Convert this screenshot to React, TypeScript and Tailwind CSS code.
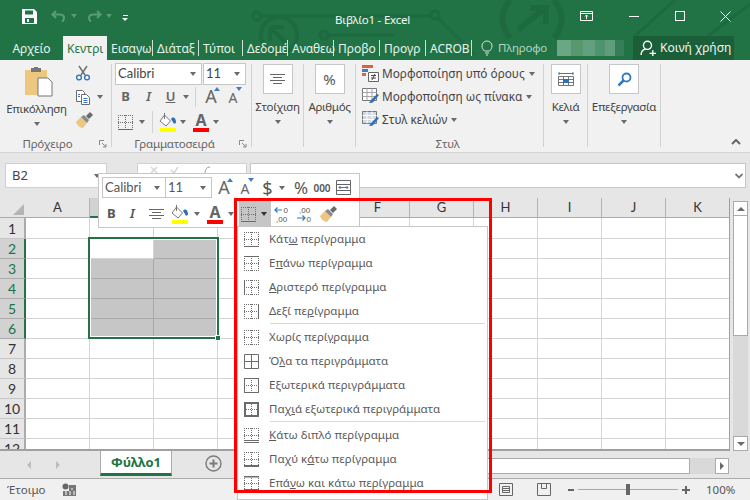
import React from "react";

const UI = "font-['Noto_Sans','Open_Sans',sans-serif]";
const CAL = "font-['Lato','Liberation_Sans',sans-serif]";

function Caret({ className = "" }: { className?: string }) {
  return <span className={`inline-block h-0 w-0 shrink-0 border-x-[3.5px] border-t-[4px] border-x-transparent border-t-[#6a6a6a] ${className}`} />;
}

type Edge = "top" | "bottom" | "left" | "right" | "all" | "outer" | "thickOuter" | "double" | "thickBottom" | "topBottom" | "none";

function BorderIcon({ kind }: { kind: Edge }) {
  const c = "#6b6b6b";
  const dot = { stroke: "#6f6f6f", strokeWidth: 1, strokeDasharray: "1 1", fill: "none" } as const;
  const solid = { stroke: c, strokeWidth: 1, fill: "none" } as const;
  if (kind === "all") {
    return (
      <svg width="15" height="15" viewBox="0 0 15 15">
        <path d="M.5.5h14v14H.5zM7.5 .5v14M.5 7.5h14" {...solid} />
      </svg>
    );
  }
  return (
    <svg width="15" height="15" viewBox="0 0 15 15">
      <path d="M0 .5h15M0 14.500h15M.5 0v15M14.500 0v15M7.500 0v15M0 7.500h15" {...dot} />
      {kind === "top" && <path d="M0 .5h15" {...solid} />}
      {kind === "bottom" && <path d="M0 14.500h15" {...solid} />}
      {kind === "left" && <path d="M.5 0v15" {...solid} />}
      {kind === "right" && <path d="M14.500 0v15" {...solid} />}
      {kind === "outer" && <path d="M.5.5h14v14H.5z" {...solid} />}
      {kind === "thickOuter" && <path d="M1 1h13v13H1z" stroke={c} strokeWidth="2" fill="none" />}
      {kind === "double" && <path d="M0 12.500h15M0 14.500h15" {...solid} />}
      {kind === "thickBottom" && <path d="M0 14h15" stroke={c} strokeWidth="2" />}
      {kind === "topBottom" && <path d="M0 .5h15M0 14h15" stroke={c} strokeWidth="2" />}
    </svg>
  );
}

function Scissors() {
  return (
    <svg width="16" height="16" viewBox="0 0 16 16" fill="none">
      <path d="M4 1l6 9M12 1L6 10" stroke="#6d6d6d" strokeWidth="1.4" />
      <circle cx="4" cy="12.500" r="2.400" stroke="#2f6fb5" strokeWidth="1.300" />
      <circle cx="12" cy="12.500" r="2.400" stroke="#2f6fb5" strokeWidth="1.300" />
    </svg>
  );
}
function CopyIcon() {
  return (
    <svg width="16" height="16" viewBox="0 0 16 16" fill="#fff" stroke="#6d6d6d">
      <path d="M1.500 1.500h6l2 2v9h-8z" />
      <path d="M6.500 5.500h5l3 3v7h-8z" />
      <path d="M8.500 9.500h4M8.500 11.500h4M8.500 13.500h4M3 5.500h2M3 7.500h2" fill="none" stroke="#3a78b8" />
    </svg>
  );
}
function Painter() {
  return (
    <svg width="18" height="17" viewBox="0 0 18 17">
      <path d="M1 10l5-5 6 6-4 5c-3 0-6-3-7-6z" fill="#eec77e" />
      <path d="M6 5l3-2 5 5-2 3z" fill="#8a8a8a" />
      <path d="M11 4l4-4 3 3-4 4z" fill="#6a6a6a" />
    </svg>
  );
}
function FillIcon() {
  return (
    <span className="flex w-[22px] flex-col items-center">
      <svg width="18" height="14" viewBox="0 0 18 14" fill="none">
        <path d="M5.500 2l6 6-4.500 5L1 8z" stroke="#777" fill="#fff" />
        <path d="M5.500 0v6" stroke="#777" />
        <path d="M12 6c2-3 5-1 5 3 0 2-3 2-3 0z" fill="#2f6fb5" />
      </svg>
      <span className="mt-px h-[4px] w-[16px] bg-[#ffff00]" />
    </span>
  );
}
function ColorA() {
  return (
    <span className="flex w-[18px] flex-col items-center">
      <span className={`text-[16px] font-bold leading-[14px] text-[#666] ${UI}`}>A</span>
      <span className="mt-px h-[4px] w-[16px] bg-[#ff0000]" />
    </span>
  );
}
function GrowA({ up }: { up: boolean }) {
  return (
    <span className="relative inline-flex h-[18px] w-[18px] items-end justify-center">
      <span className={`${UI} leading-none text-[#666] ${up ? "text-[18px]" : "text-[14px]"}`}>A</span>
      <span className={`absolute right-0 top-0 h-0 w-0 border-x-[3px] border-x-transparent ${up ? "border-b-[4px] border-b-[#3f7fbf]" : "border-t-[4px] border-t-[#3f7fbf]"}`} />
    </span>
  );
}
function Decimal({ dir }: { dir: "inc" | "dec" }) {
  return (
    <svg width="18" height="17" viewBox="0 0 18 17" fill="none">
      {dir === "inc" ? (
        <>
          <path d="M9 4H2M4.500 1.500L2 4l2.500 2.500" stroke="#3478bd" strokeWidth="1.200" />
          <text x="10.500" y="7" fontSize="8" fill="#555" fontFamily="Liberation Sans">0</text>
          <text x="3" y="15.500" fontSize="8" fill="#555" fontFamily="Liberation Sans">,00</text>
        </>
      ) : (
        <>
          <text x="3" y="7" fontSize="8" fill="#555" fontFamily="Liberation Sans">,00</text>
          <path d="M1 12h8M6.500 9.500L9 12l-2.500 2.500" stroke="#3478bd" strokeWidth="1.200" />
          <text x="10.500" y="15.500" fontSize="8" fill="#555" fontFamily="Liberation Sans">0</text>
        </>
      )}
    </svg>
  );
}
function CenterLines() {
  return (
    <svg width="15" height="11" viewBox="0 0 15 11" stroke="#666">
      <path d="M0 .5h15M3 3.500h9M0 6.500h15M3 9.500h9" />
    </svg>
  );
}
function Launcher() {
  return (
    <svg width="8" height="8" viewBox="0 0 8 8" fill="none" stroke="#888">
      <path d="M.5 5V.5H5M3 3l4 4M7 4v3H4" />
    </svg>
  );
}
function StyleIcon({ kind }: { kind: "cond" | "table" | "cell" }) {
  if (kind === "cond") {
    return (
      <svg width="17" height="17" viewBox="0 0 17 17">
        <path d="M0 0h11v3H0z" fill="#e0613a" />
        <path d="M0 4h6v3H0z" fill="#3f7fbf" />
        <path d="M0 8h4v3H0z" fill="#e0613a" />
        <path d="M6.500 7.500h10v9h-10z" fill="#fff" stroke="#666" />
        <path d="M9 10.500h5M9 13h5M10 15l3-6" stroke="#444" />
      </svg>
    );
  }
  return (
    <svg width="17" height="17" viewBox="0 0 17 17" fill="none">
      <path d="M.5.5h14v12H.5z" fill={kind === "cell" ? "#cfd8e3" : "#fff"} stroke="#777" />
      <path d="M5 .5v12M10 .5v12M.5 4.500h14M.5 8.500h14" stroke={kind === "cell" ? "#fff" : "#a5a5a5"} />
      <path d="M7 15l3-4 5-5 2 1-5 6c-1 2-3 2-5 2z" fill="#2f6fb5" />
    </svg>
  );
}
function BigBox({ children }: { children: React.ReactNode }) {
  return <span className="flex h-[30px] w-[30px] items-center justify-center border border-[#c6c6c6] bg-white">{children}</span>;
}

const tabs = [
  { t: "Εισαγω", w: "w-[46px]" },
  { t: "Διάταξ", w: "w-[46px]" },
  { t: "Τύποι", w: "w-[44px]" },
  { t: "Δεδομέ", w: "w-[45px]" },
  { t: "Αναθεω", w: "w-[46px]" },
  { t: "Προβο", w: "w-[46px]" },
  { t: "Προγρ", w: "w-[46px]" },
  { t: "ACROB", w: "w-[46px]" },
];

function Pattern() {
  return (
    <svg className="absolute left-0 top-0" width="750" height="60" viewBox="0 0 750 60" fill="none" stroke="#1d6a40" strokeWidth="3">
      <circle cx="257" cy="16" r="4" />
      <path d="M261 16h170" />
      <circle cx="279" cy="35" r="18" strokeWidth="4" />
      <path d="M270 27h14M270 27v14M270 27l18 18" strokeWidth="4" />
      <circle cx="324" cy="35" r="4" />
      <path d="M328 35h66" />
      <circle cx="435" cy="15" r="4" />
      <path d="M438 18l36 36" />
      <path d="M510 0c-10 12-10 26 0 38M554 0c10 12 10 26 0 38" strokeWidth="6" />
      <path d="M518 30L545 8M530 8h16v16" strokeWidth="6" />
      <path d="M635 36L675 0M708 36L750 4" />
    </svg>
  );
}

function TitleBar() {
  return (
    <div className="relative flex h-[36px] items-center pb-[4px] text-white">
      <svg className="ml-[22px]" width="15" height="15" viewBox="0 0 15 15" fill="#fff">
        <path d="M0 0h12l3 3v12H0zM3 1.500v4h8v-4zM3 9v5h9V9z" fillRule="evenodd" />
        <path d="M5 10h2v3H5z" />
      </svg>
      <svg className="ml-[14px]" width="16" height="12" viewBox="0 0 16 12" fill="none" stroke="#5d9a78" strokeWidth="2">
        <path d="M5 1L1.500 4.500 5 8M2 4.500h7c3 0 4 2 4 3.500s-1 3-2 3.500" />
      </svg>
      <Caret className="ml-[4px] !border-t-[#5d9a78]" />
      <svg className="ml-[9px]" width="16" height="12" viewBox="0 0 16 12" fill="none" stroke="#5d9a78" strokeWidth="2">
        <path d="M11 1l3.500 3.500L11 8M14 4.500H7C4 4.500 3 6.500 3 8s1 3 2 3.500" />
      </svg>
      <Caret className="ml-[4px] !border-t-[#5d9a78]" />
      <span className="ml-[10px] mt-[4px] flex flex-col items-center gap-[2px]">
        <span className="h-px w-[5px] bg-white" />
        <Caret className="!border-x-[3px] !border-t-[3px] !border-t-white" />
      </span>
      <span className={`ml-[207px] mt-[8px] text-[11.5px] tracking-[-0.2px] ${UI} text-[#f3f8f5]`}>Βιβλίο1 - Excel</span>
      <svg className="ml-[170px]" width="14" height="11" viewBox="0 0 14 11" fill="none" stroke="#fff">
        <path d="M.5.5h12v9H.5zM.5 2.500h12M6.500 8V4M5 5.500l1.500-1.500L8 5.500" />
      </svg>
      <span className="ml-[35px] h-px w-[10px] bg-white" />
      <span className="ml-[36px] h-[10px] w-[10px] border border-white" />
      <svg className="ml-[35px]" width="11" height="11" viewBox="0 0 11 11" stroke="#fff">
        <path d="M.5.5l10 10M10.500.5l-10 10" />
      </svg>
    </div>
  );
}

function TabBar() {
  return (
    <div className={`relative flex h-[24px] items-stretch text-[12px] text-[#e9f3ee] ${UI}`}>
      <span className="flex w-[63px] shrink-0 items-center justify-center pt-px">Αρχείο</span>
      <span className="flex w-[44px] shrink-0 items-center whitespace-nowrap bg-[#f1f1f1] pl-[4px] pt-px text-[#217346]">Κεντρι</span>
      {tabs.map(({ t, w }) => (
        <span key={t} className={`my-auto flex h-[16px] shrink-0 items-center whitespace-nowrap border-r border-[#cfe0d6] pl-[4px] pt-px ${w}`}>
          {t}
        </span>
      ))}
      <svg className="my-auto ml-[9px] shrink-0" width="12" height="16" viewBox="0 0 12 16" fill="none" stroke="#d8e8df">
        <path d="M3.500 11C2 9.500 1 8 1 6a5 5 0 0110 0c0 2-1 3.500-2.500 5zM4 13h4M5 15h2" />
      </svg>
      <span className="my-auto ml-[5px] w-[49px] shrink-0 whitespace-nowrap text-[11.5px] tracking-[-0.2px] text-[#b6d3c4]">Πληροφο</span>
      <span className="my-auto ml-[10px] flex h-[16px] w-[67px] shrink-0">
        <span className="h-full w-[14px] bg-[#6ba685]" />
        <span className="h-full w-[12px] bg-[#57986f]" />
        <span className="h-full w-[12px] bg-[#64a07f]" />
        <span className="h-full w-[10px] bg-[#4f9470]" />
        <span className="h-full w-[10px] bg-[#609d7c]" />
        <span className="h-full w-[9px] bg-[#357f58]" />
      </span>
      <span className="ml-[9px] flex w-[101px] shrink-0 items-center gap-[4px] bg-[#1b5f39] pl-[7px] text-[#f1f6f3]">
        <svg width="16" height="16" viewBox="0 0 15 15" fill="none" stroke="#fff" strokeWidth="1.300">
          <circle cx="7" cy="5" r="3.800" />
          <path d="M1 14c0-3 2-5 4-5.500M9 12.500h6M12 9.500v6" />
        </svg>
        Κοινή χρήση
      </span>
    </div>
  );
}

function GroupSep() {
  return <span className="mb-[5px] mt-[4px] w-px shrink-0 bg-[#d2d2d2]" />;
}

function Ribbon() {
  const label = "flex h-[16px] items-center justify-center whitespace-nowrap text-[11.5px] tracking-[-0.2px] text-[#666]";
  const big = "mt-[5px] whitespace-nowrap text-[11.5px] leading-[16px] tracking-[-0.3px]";
  return (
    <div className={`flex h-[93px] border-b border-[#d4d4d4] bg-[#f1f1f1] ${UI} text-[11.5px] text-[#444]`}>
      {/* Πρόχειρο */}
      <div className="flex w-[111px] shrink-0 flex-col">
        <div className="flex h-[76px]">
          <div className="flex w-[73px] flex-col items-center pt-[7px]">
            <svg className="ml-[5px]" width="30" height="30" viewBox="0 0 30 30">
              <path d="M1 3h22v25H1z" fill="#eec77e" />
              <path d="M7 1h10v4H7z" fill="#777" />
              <path d="M10 0h4v2h-4z" fill="#777" />
              <path d="M14 11h10l4 4v14H14z" fill="#fff" stroke="#777" />
            </svg>
            <span className="mt-[4px] text-[11.5px] leading-[16px] tracking-[-0.3px]">Επικόλληση</span>
            <Caret className="mt-[5px]" />
          </div>
          <div className="flex flex-col items-start gap-[7px] pl-[2px] pt-[5px]">
            <Scissors />
            <span className="mt-px flex items-center gap-[6px]"><CopyIcon /><Caret /></span>
            <Painter />
          </div>
        </div>
        <div className={`${label} relative`}>
          <span className="mr-[16px]">Πρόχειρο</span>
          <span className="absolute right-[4px] top-[4px]"><Launcher /></span>
        </div>
      </div>
      <GroupSep />
      {/* Γραμματοσειρά */}
      <div className="flex w-[139px] shrink-0 flex-col pl-[3px]">
        <div className="mt-[3px] flex h-[22px] w-[131px] gap-px">
          <span className={`flex w-[87px] items-center justify-between border border-[#c6c6c6] bg-white px-[2px] pr-[5px] text-[13px] ${CAL}`}>Calibri<Caret /></span>
          <span className={`flex w-[43px] items-center justify-between border border-[#c6c6c6] bg-white px-[2px] pr-[5px] text-[13px] ${CAL}`}>11<Caret /></span>
        </div>
        <div className="mt-px flex h-[22px] items-center">
          <b className="ml-[2px] w-[17px] text-center text-[13px] text-[#666]">B</b>
          <i className="ml-[6px] w-[17px] text-center text-[13px] font-semibold text-[#666]">I</i>
          <u className="ml-[5px] w-[17px] text-center text-[13px] font-semibold text-[#666]">U</u>
          <Caret className="ml-[4px]" />
          <span className="ml-[6px] h-[20px] w-px bg-[#d2d2d2]" />
          <span className="ml-[6px]"><GrowA up /></span>
          <span className="ml-[4px]"><GrowA up={false} /></span>
        </div>
        <div className="mt-[2px] flex h-[24px] items-center">
          <span className="ml-[3px] flex"><BorderIcon kind="bottom" /></span>
          <Caret className="ml-[6px]" />
          <span className="ml-[7px] h-[22px] w-px bg-[#d2d2d2]" />
          <span className="ml-[4px]"><FillIcon /></span>
          <Caret className="ml-px" />
          <span className="ml-[6px]"><ColorA /></span>
          <Caret className="ml-[3px]" />
        </div>
        <div className={`${label} relative mt-auto`}>
          <span className="mr-[17px]">Γραμματοσειρά</span>
          <span className="absolute right-[4px] top-[4px]"><Launcher /></span>
        </div>
      </div>
      <GroupSep />
      {/* Στοίχιση */}
      <div className="flex w-[51px] shrink-0 flex-col items-center pt-[4px]">
        <BigBox><CenterLines /></BigBox>
        <span className={big}>Στοίχιση</span>
        <Caret className="mt-[5px]" />
      </div>
      <GroupSep />
      {/* Αριθμός */}
      <div className="flex w-[51px] shrink-0 flex-col items-center pt-[4px]">
        <BigBox><span className="text-[15px] text-[#555]">%</span></BigBox>
        <span className={big}>Αριθμός</span>
        <Caret className="mt-[5px]" />
      </div>
      <GroupSep />
      {/* Στυλ */}
      <div className="flex w-[187px] shrink-0 flex-col pl-[6px]">
        <div className="flex flex-col gap-[6px] pt-[5px] text-[11.8px]">
          <span className="flex h-[17px] items-center gap-[3px] whitespace-nowrap"><StyleIcon kind="cond" />Μορφοποίηση υπό όρους<Caret className="ml-px" /></span>
          <span className="flex h-[17px] items-center gap-[3px] whitespace-nowrap"><StyleIcon kind="table" />Μορφοποίηση ως πίνακα<Caret className="ml-px" /></span>
          <span className="flex h-[17px] items-center gap-[3px] whitespace-nowrap"><StyleIcon kind="cell" />Στυλ κελιών<Caret className="ml-px" /></span>
        </div>
        <div className={`${label} mt-auto pr-[10px]`}>Στυλ</div>
      </div>
      <GroupSep />
      {/* Κελιά */}
      <div className="flex w-[43px] shrink-0 flex-col items-center pt-[4px]">
        <BigBox>
          <svg width="16" height="17" viewBox="0 0 16 17" fill="none">
            <path d="M.5 5.500h15v9H.5zM.5 8.500h15M.5 11.500h15M5.500 5.500v9M10.500 5.500v9" stroke="#777" />
            <path d="M5 8h6v4H5z" fill="#2f6fb5" />
            <path d="M1 2.500h14M1 1v3M15 1v3" stroke="#3478bd" />
          </svg>
        </BigBox>
        <span className={big}>Κελιά</span>
        <Caret className="mt-[5px]" />
      </div>
      <GroupSep />
      {/* Επεξεργασία */}
      <div className="flex w-[72px] shrink-0 flex-col items-center pt-[4px]">
        <BigBox>
          <svg width="15" height="15" viewBox="0 0 15 15" fill="none">
            <circle cx="9.500" cy="5.500" r="4" stroke="#3478bd" strokeWidth="1.800" />
            <path d="M6.500 8.500l-5 5" stroke="#3478bd" strokeWidth="2.500" />
          </svg>
        </BigBox>
        <span className={big}>Επεξεργασία</span>
        <Caret className="mt-[5px]" />
      </div>
      <GroupSep />
      <div className="flex flex-1 items-end justify-end pb-[7px] pr-[9px]">
        <svg width="10" height="6" viewBox="0 0 10 6" fill="none" stroke="#666" strokeWidth="2">
          <path d="M1 5l4-4 4 4" />
        </svg>
      </div>
    </div>
  );
}

function FormulaBar() {
  return (
    <div className={`flex h-[45px] items-start bg-[#e6e6e6] pt-[10px] ${UI} text-[13px] text-[#444]`}>
      <span className="ml-[5px] flex h-[25px] w-[102px] items-center justify-between border border-[#d0d0d0] bg-white px-[6px]">B2<Caret /></span>
      <span className="ml-[30px] flex h-[25px] w-[110px] items-start gap-[12px] border border-[#d0d0d0] bg-white pl-[12px] pt-[2px]">
        <svg width="8" height="8" viewBox="0 0 8 8" stroke="#d5d5d5" strokeWidth="1.500"><path d="M1 1l6 6M7 1L1 7" /></svg>
        <svg width="9" height="8" viewBox="0 0 9 8" fill="none" stroke="#d5d5d5" strokeWidth="1.500"><path d="M1 4l3 3 4-6" /></svg>
        <svg className="ml-[12px]" width="9" height="8" viewBox="0 0 9 8" fill="none" stroke="#999"><path d="M2 8c0-5 2-7 5-7" /></svg>
      </span>
      <span className="ml-[3px] flex h-[25px] w-[496px] items-center justify-end border border-[#c6c6c6] bg-white pr-[2px]">
        <svg width="8" height="6" viewBox="0 0 8 6" fill="none" stroke="#777" strokeWidth="1.800">
          <path d="M.5 1L4 4.500 7.500 1" />
        </svg>
      </span>
    </div>
  );
}

const cols = ["A", "B", "C", "D", "E", "F", "G", "H", "I", "J", "K"];
const rows = [1, 2, 3, 4, 5, 6, 7, 8, 9, 10, 11, 12];

function Sheet() {
  return (
    <div className="flex h-[253px] bg-[#e6e6e6]">
      <div className="relative h-[253px] w-[730px] shrink-0 overflow-hidden border-b-2 border-r border-[#a0a0a0]">
        <div className={`flex h-[20px] ${CAL} text-[13px] text-[#333]`}>
          <span className="flex w-[26px] shrink-0 items-end justify-end border-b border-[#ababab] pb-[2px] pr-[2px]">
            <span className="h-0 w-0 border-b-[11px] border-l-[11px] border-b-[#b4b4b4] border-l-transparent" />
          </span>
          {cols.map((c) => (
            <span
              key={c}
              className={`flex w-[64px] shrink-0 items-center justify-center border-r ${c === "B" || c === "C" ? "border-b-2 border-r-[#ababab] border-b-[#217346] bg-[#d2d2d2]" : "border-b border-r-[#b4b4b4] border-b-[#ababab]"}`}
            >
              {c}
            </span>
          ))}
        </div>
        {rows.map((r) => {
          const inSel = r >= 2 && r <= 6;
          return (
            <div key={r} className={`flex bg-white ${r === 1 ? "h-[21px]" : "h-[20px]"}`}>
              <span className={`flex w-[26px] shrink-0 items-center justify-center border-b border-r-2 text-[14px] ${CAL} ${inSel ? "border-b-[#ababab] border-r-[#217346] bg-[#d2d2d2] text-[#217346]" : "border-b-[#c6c6c6] border-r-[#ababab] bg-[#e6e6e6] text-[#333]"}`}>
                {r}
              </span>
              {cols.map((c) => {
                const gray = inSel && (c === "B" || c === "C") && !(r === 2 && c === "B");
                return <span key={c} className={`w-[64px] shrink-0 border-b border-r ${gray ? "border-[#a9a9a9] bg-[#c6c6c6]" : "border-[#d4d4d4]"}`} />;
              })}
            </div>
          );
        })}
        {/* selection outline */}
        <span className="absolute left-[88px] top-[39px] h-[102px] w-[131px] border-2 border-[#217346]" />
        <span className="absolute left-[90px] top-[41px] h-[98px] w-[127px] border border-white" />
        <span className="absolute left-[215px] top-[137px] h-[6px] w-[6px] border border-white bg-[#217346]" />
      </div>
      <div className="ml-[3px] flex h-[253px] w-[15px] shrink-0 flex-col pt-[3px]">
        <span className="flex h-[15px] items-center justify-center border border-[#ababab] bg-white">
          <span className="h-0 w-0 border-x-[4px] border-b-[4px] border-x-transparent border-b-[#6a6a6a]" />
        </span>
        <span className="h-[120px] border-x border-b border-[#ababab] bg-white" />
        <span className="flex-1 bg-[#d9d9d9]" />
        <span className="flex h-[15px] items-center justify-center border border-[#ababab] bg-white">
          <Caret className="!border-x-[4px]" />
        </span>
      </div>
    </div>
  );
}

function SheetTabs() {
  return (
    <div className="flex h-[28px] border-b border-[#ababab] bg-[#e6e6e6] pr-[21px]">
      <div className="flex w-[100px] shrink-0 items-center pl-[27px]">
        <span className="h-0 w-0 border-y-[4px] border-r-[4px] border-y-transparent border-r-[#bdbdbd]" />
        <span className="ml-[25px] h-0 w-0 border-y-[4px] border-l-[4px] border-y-transparent border-l-[#bdbdbd]" />
      </div>
      <span className={`flex h-[25px] w-[72px] shrink-0 items-center justify-center border-x border-b-[3px] border-x-[#ababab] border-b-[#217346] bg-white pt-[2px] text-[13px] font-bold text-[#217346] ${UI}`}>Φύλλο1</span>
      <div className="flex w-[82px] shrink-0 items-center justify-center pb-[3px]">
        <svg width="17" height="17" viewBox="0 0 17 17" fill="none" stroke="#7b7b7b">
          <circle cx="8.500" cy="8.500" r="7.500" strokeWidth="1.400" />
          <path d="M8.500 4.500v8M4.500 8.500h8" strokeWidth="2" />
        </svg>
      </div>
      <div className="mt-[7px] flex h-[16px] flex-1">
        <span className="flex-1 border border-[#ababab] bg-white" />
        <span className="w-[25px] bg-[#d9d9d9]" />
        <span className="flex w-[14px] items-center justify-center border border-[#ababab] bg-white">
          <span className="h-0 w-0 border-y-[4px] border-l-[4px] border-y-transparent border-l-[#6a6a6a]" />
        </span>
      </div>
    </div>
  );
}

function StatusBar() {
  return (
    <div className={`flex h-[21px] items-center bg-[#f0f0f0] pl-[7px] text-[11.5px] text-[#555] ${UI}`}>
      <span className="w-[55px] shrink-0">Έτοιμο</span>
      <svg width="14" height="13" viewBox="0 0 14 13">
        <circle cx="3.500" cy="3.500" r="3" fill="#666" />
        <path d="M7 2h7v11H1V8h6z" fill="#777" />
        <path d="M3 9h2M7 9h2M11 9h2M7 11h2M11 11h2M3 11h2M9 6h2" stroke="#fff" />
      </svg>
      <svg className="ml-[423px]" width="14" height="13" viewBox="0 0 14 13" fill="none" stroke="#666">
        <path d="M.5.5h13v12H.5zM3.500 3.500h7v6h-7zM3.500 5.500h7M3.500 7.500h7" />
      </svg>
      <svg className="ml-[24px]" width="14" height="13" viewBox="0 0 14 13" fill="none" stroke="#666">
        <path d="M.5.5h13v12H.5zM4.500.5v5h5v-5" />
      </svg>
      <span className="ml-[17px] h-[2px] w-[6px] bg-[#666]" />
      <span className="ml-[4px] flex h-px w-[100px] justify-center bg-[#a8a8a8]">
        <span className="h-[11px] w-[4px] -translate-y-[5px] bg-[#666]" />
      </span>
      <span className="relative ml-[4px] h-[2px] w-[8px] bg-[#666]">
        <span className="absolute left-[3px] top-[-3px] h-[8px] w-[2px] bg-[#666]" />
      </span>
      <span className="ml-[16px]">100%</span>
    </div>
  );
}

function MiniToolbar() {
  return (
    <div className={`absolute left-[98px] top-[173px] z-10 h-[55px] w-[262px] border border-[#c6c6c6] bg-white ${UI} text-[#555]`}>
      <div className="flex h-[27px] items-center">
        <span className={`ml-[3px] flex h-[21px] w-[64px] items-center justify-between border border-[#c6c6c6] px-[2px] pr-[5px] text-[13px] ${CAL}`}>Calibri<Caret /></span>
        <span className={`flex h-[21px] w-[46px] items-center justify-between border border-l-0 border-[#c6c6c6] px-[2px] pr-[5px] text-[13px] ${CAL}`}>11<Caret /></span>
        <span className="ml-[3px]"><GrowA up /></span>
        <span className="ml-[3px]"><GrowA up={false} /></span>
        <span className="ml-[8px] w-[11px] text-center text-[18px] leading-none">$</span>
        <Caret className="ml-[6px]" />
        <span className="ml-[8px] w-[16px] text-center text-[17px] leading-none">%</span>
        <span className="ml-[4px] w-[18px] text-center text-[10px] font-semibold leading-none">000</span>
        <svg className="ml-[5px]" width="15" height="15" viewBox="0 0 15 15" fill="none">
          <path d="M.5.5h14v14H.5zM.5 4.500h14M.5 10.500h14" stroke="#666" />
          <path d="M3 7.500h9M4.500 6L3 7.500 4.500 9M10.500 6L12 7.500 10.500 9" stroke="#3478bd" />
        </svg>
      </div>
      <div className="flex h-[26px] items-center">
        <b className="ml-[8px] w-[10px] text-[13px]">B</b>
        <i className="ml-[13px] w-[8px] text-[13px] font-semibold">I</i>
        <span className="ml-[11px] flex"><CenterLines /></span>
        <span className="ml-[5px]"><FillIcon /></span>
        <Caret className="ml-[3px]" />
        <span className="ml-[6px]"><ColorA /></span>
        <Caret className="ml-[4px]" />
        <span className="ml-[5px] flex h-full w-[32px] items-center gap-[5px] bg-[#c6c6c6] pl-[2px]">
          <BorderIcon kind="bottom" />
          <Caret className="!border-t-[#333]" />
        </span>
        <span className="ml-[2px] flex"><Decimal dir="inc" /></span>
        <span className="ml-[5px] flex"><Decimal dir="dec" /></span>
        <span className="ml-[5px] flex"><Painter /></span>
      </div>
    </div>
  );
}

type Item = { k: Edge; t: React.ReactNode };
const group1: Item[] = [
  { k: "bottom", t: <>Κάτ<u>ω</u> περίγραμμα</> },
  { k: "top", t: <>Ε<u>π</u>άνω περίγραμμα</> },
  { k: "left", t: <><u>Α</u>ριστερό περίγραμμα</> },
  { k: "right", t: <>Δεξί πε<u>ρ</u>ίγραμμα</> },
];
const group2: Item[] = [
  { k: "none", t: <>Χωρίς περί<u>γ</u>ραμμα</> },
  { k: "all", t: <>Ό<u>λ</u>α τα περιγράμματα</> },
  { k: "outer", t: <>Εξωτερικά περιγράμματα</> },
  { k: "thickOuter", t: <>Παχ<u>ι</u>ά εξωτερικά περιγράμματα</> },
];
const group3: Item[] = [
  { k: "double", t: <><u>Κ</u>άτω διπλό περίγραμμα</> },
  { k: "thickBottom", t: <>Παχύ κ<u>ά</u>τω περίγραμμα</> },
  { k: "topBottom", t: <>Επά<u>ν</u>ω και κάτω περίγραμμα</> },
];

function MenuGroup({ items }: { items: Item[] }) {
  return (
    <>
      {items.map((it, i) => (
        <div key={i} className="flex h-[24px] items-center pl-[6px]">
          <BorderIcon kind={it.k} />
          <span className="ml-[10px] whitespace-nowrap">{it.t}</span>
        </div>
      ))}
    </>
  );
}

function BorderMenu() {
  return (
    <div className={`absolute left-[237px] top-[226px] z-20 h-[274px] w-[251px] overflow-hidden border border-[#c6c6c6] bg-white text-[11.5px] text-[#5a5a5a] ${UI}`}>
      <MenuGroup items={group1} />
      <div className="mb-px ml-[32px] mr-[2px] h-px bg-[#d8d8d8]" />
      <MenuGroup items={group2} />
      <div className="mb-px ml-[32px] mr-[2px] h-px bg-[#d8d8d8]" />
      <MenuGroup items={group3} />
    </div>
  );
}

export default function App() {
  return (
    <div className="relative h-[500px] w-[750px] overflow-hidden bg-[#e6e6e6]">
      <div className="relative h-[60px] overflow-hidden bg-[#217346]">
        <Pattern />
        <TitleBar />
        <TabBar />
      </div>
      <Ribbon />
      <FormulaBar />
      <Sheet />
      <SheetTabs />
      <StatusBar />
      <MiniToolbar />
      <BorderMenu />
      <div className="absolute left-[234px] top-[198px] z-30 h-[295px] w-[258px] border-[3px] border-[#ff0000]" />
    </div>
  );
}
